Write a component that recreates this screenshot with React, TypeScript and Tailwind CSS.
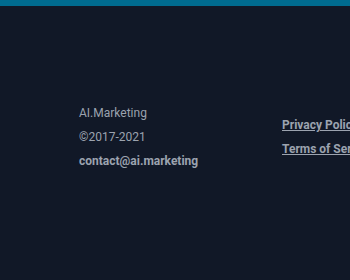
export default function App() {
  return (
    <div className="w-[350px] h-[280px] overflow-hidden bg-[#111827] font-['Roboto',sans-serif] text-[12px] text-[#9ca3af]">
      <div className="h-[6px] bg-[#006b8f]"></div>
      <footer className="flex items-center pl-[79px] pt-[95px] whitespace-nowrap">
        <div className="flex flex-col w-[203px] shrink-0">
          <span className="leading-6">AI.Marketing</span>
          <span className="leading-6">©2017-2021</span>
          <a href="#" className="leading-6 font-bold">contact@ai.marketing</a>
        </div>
        <div className="flex flex-col shrink-0">
          <a href="#" className="leading-6 font-bold underline">Privacy Policy</a>
          <a href="#" className="leading-6 font-bold underline">Terms of Service</a>
        </div>
      </footer>
    </div>
  )
}
